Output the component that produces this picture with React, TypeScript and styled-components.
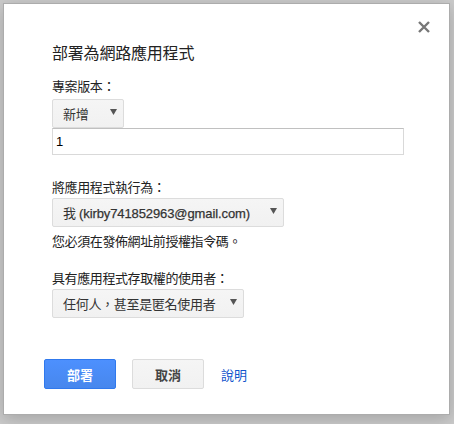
import React from 'react';
import styled, { createGlobalStyle } from 'styled-components';

const GlobalStyle = createGlobalStyle`
  html, body {
    margin: 0;
    padding: 0;
    background: #cbcbcb;
  }
  body {
    font-family: "Liberation Sans", "Noto Sans CJK TC", Arial, sans-serif;
    color: #222;
  }
`;

const Page = styled.div`
  width: 454px;
  height: 424px;
  padding: 3px;
  box-sizing: border-box;
  overflow: hidden;
`;

const Dialog = styled.div`
  position: relative;
  width: 447px;
  height: 412px;
  box-sizing: border-box;
  background: #fff;
  border: 1px solid #acacac;
  box-shadow: 0 4px 16px rgba(0, 0, 0, 0.2);
  padding: 40px 0 0 48px;
  display: flex;
  flex-direction: column;
  align-items: flex-start;
`;

const CloseButton = styled.button`
  position: absolute;
  top: 14px;
  right: 16px;
  width: 18px;
  height: 18px;
  padding: 0;
  border: 0;
  background: transparent;
  display: flex;
  align-items: center;
  justify-content: center;
  cursor: pointer;
`;

const Title = styled.div`
  font-size: 16px;
  line-height: 20px;
  color: #222;
  letter-spacing: -0.2px;
`;

const Label = styled.div<{ $top: number }>`
  margin-top: ${(p) => p.$top}px;
  font-size: 13px;
  line-height: 17px;
  color: #222;
  letter-spacing: -0.4px;
`;

const Hint = styled.div`
  margin-top: 6px;
  font-size: 13px;
  line-height: 17px;
  color: #222;
  letter-spacing: -0.4px;
`;

const Select = styled.div<{ $width: number; $top: number }>`
  margin-top: ${(p) => p.$top}px;
  width: ${(p) => p.$width}px;
  height: 29px;
  box-sizing: border-box;
  display: flex;
  align-items: center;
  justify-content: space-between;
  padding: 0 6px 0 10px;
  background: linear-gradient(#f5f5f5, #f1f1f1);
  border: 1px solid #dcdcdc;
  border-radius: 2px;
  font-size: 13px;
  color: #333;
  letter-spacing: -0.3px;
`;

const Latin = styled.span`
  letter-spacing: -0.1px;
  -webkit-text-stroke: 0.25px #333;
`;

const Arrow = styled.svg`
  flex: none;
  margin-bottom: 3px;
`;

const TextInput = styled.input`
  width: 352px;
  height: 27px;
  box-sizing: border-box;
  margin: 0;
  padding: 2px 3px;
  border: 1px solid #d9d9d9;
  border-top-color: #c0c0c0;
  font-family: inherit;
  font-size: 13px;
  color: #000;
  outline: none;
`;

const Footer = styled.div`
  margin-top: 41px;
  margin-left: -8px;
  display: flex;
  align-items: center;
  gap: 16px;
`;

const Button = styled.button<{ $primary?: boolean }>`
  width: 72px;
  height: 30px;
  box-sizing: border-box;
  border-radius: 2px;
  font-family: inherit;
  font-size: 13px;
  font-weight: bold;
  cursor: pointer;
  border: 1px solid ${(p) => (p.$primary ? '#3079ed' : '#dcdcdc')};
  background: ${(p) =>
    p.$primary ? 'linear-gradient(#4d90fe, #4787ed)' : 'linear-gradient(#f5f5f5, #f1f1f1)'};
  color: ${(p) => (p.$primary ? '#fff' : '#444')};
`;

const HelpLink = styled.a`
  margin-left: 1px;
  font-size: 13px;
  color: #15c;
  text-decoration: none;
`;

const DropArrow = () => (
  <Arrow width="7" height="6" viewBox="0 0 7 6">
    <path d="M0 0 H7 L3.5 6 Z" fill="#555" />
  </Arrow>
);

const App = () => {
  return (
    <Page>
      <GlobalStyle />
      <Dialog>
        <CloseButton aria-label="關閉">
          <svg width="12" height="12" viewBox="0 0 12 12">
            <path d="M1 1 L11 11 M11 1 L1 11" stroke="#777" strokeWidth="2.4" />
          </svg>
        </CloseButton>
        <Title>部署為網路應用程式</Title>
        <Label $top={14}>專案版本：</Label>
        <Select $width={72} $top={4}>
          <span>新增</span>
          <DropArrow />
        </Select>
        <TextInput defaultValue="1" />
        <Label $top={24}>將應用程式執行為：</Label>
        <Select $width={232} $top={2}>
          <span>
            我 <Latin>(kirby741852963@gmail.com)</Latin>
          </span>
          <DropArrow />
        </Select>
        <Hint>您必須在發佈網址前授權指令碼。</Hint>
        <Label $top={20}>具有應用程式存取權的使用者：</Label>
        <Select $width={192} $top={2}>
          <span>任何人，甚至是匿名使用者</span>
          <DropArrow />
        </Select>
        <Footer>
          <Button $primary>部署</Button>
          <Button>取消</Button>
          <HelpLink href="#">說明</HelpLink>
        </Footer>
      </Dialog>
    </Page>
  );
};

export default App;
